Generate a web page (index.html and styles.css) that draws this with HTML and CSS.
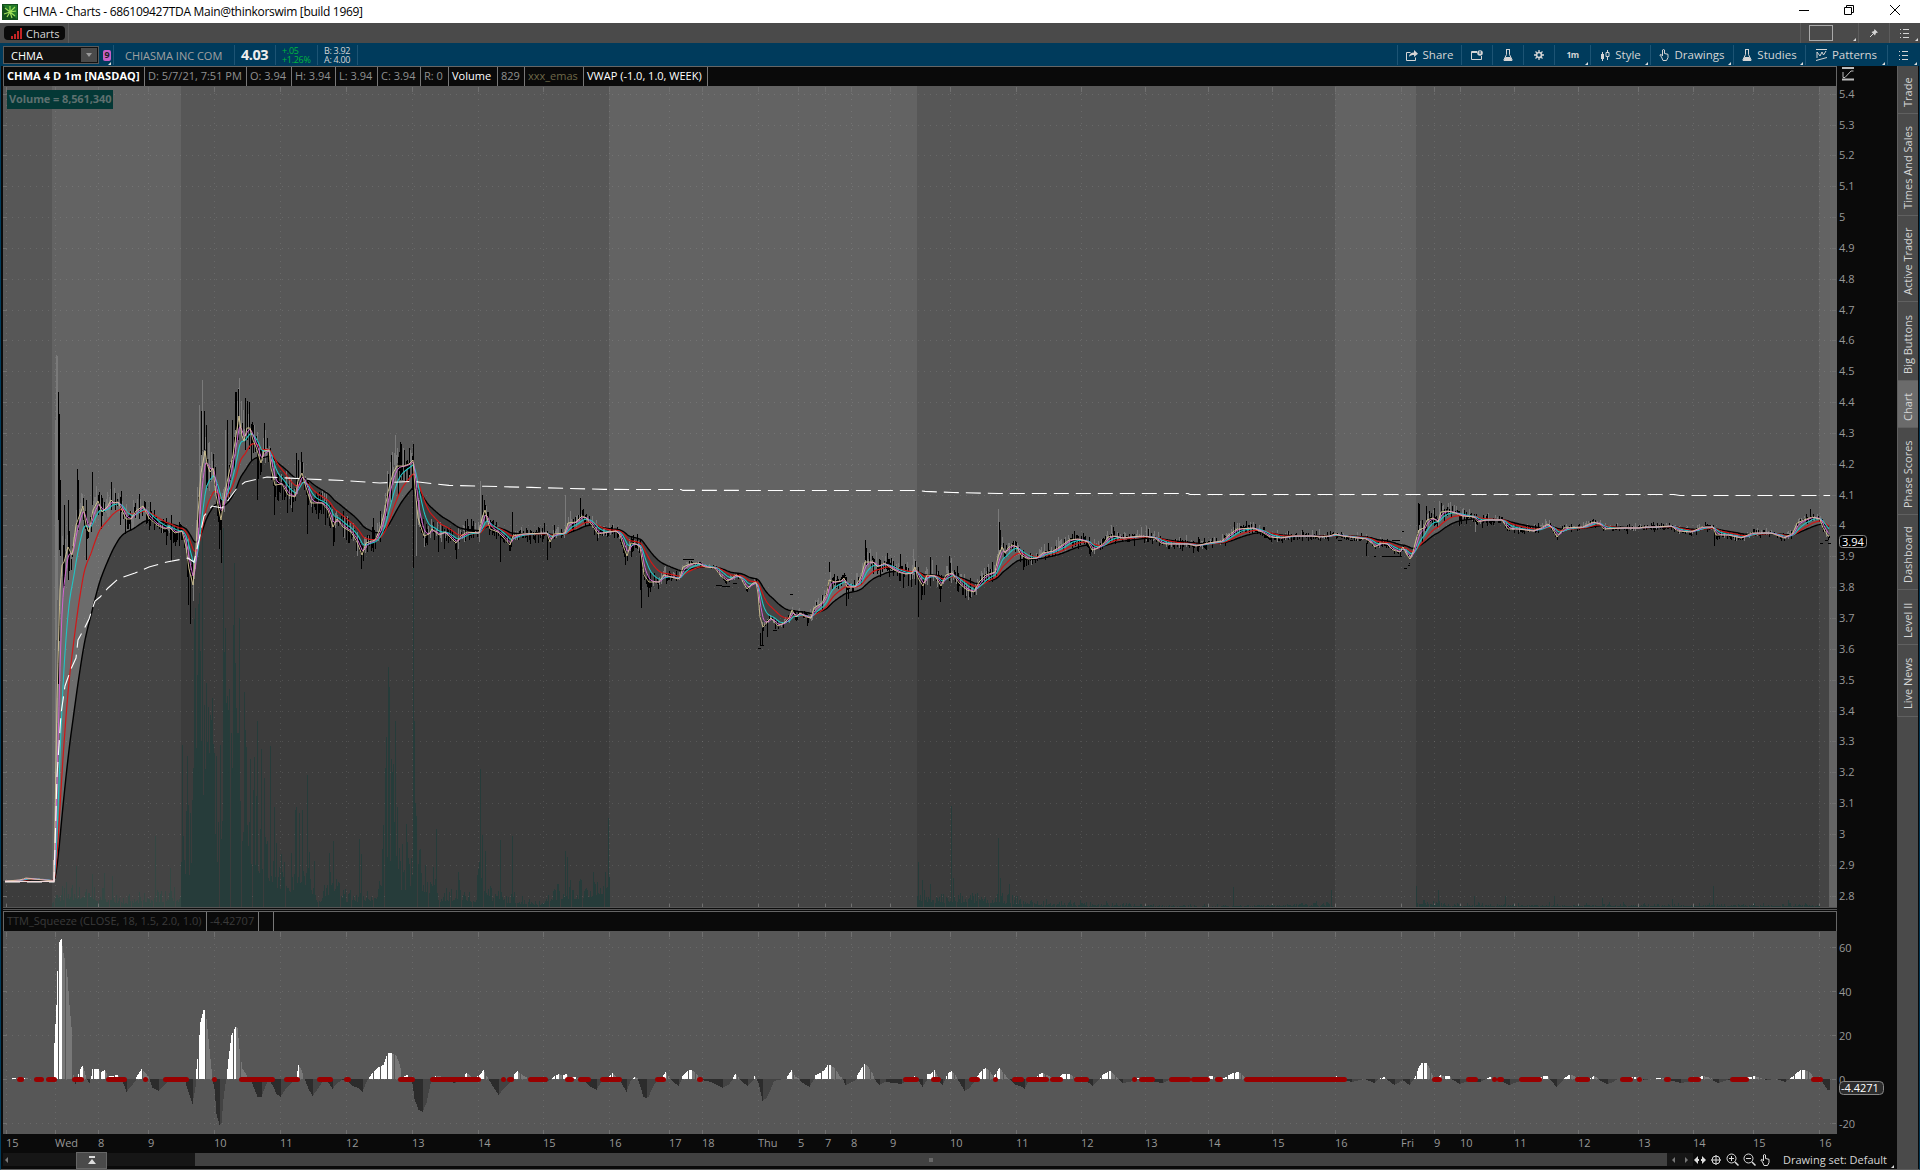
FILE: index.html
```
<!DOCTYPE html>
<html lang="en">

<head>
  <meta charset="UTF-8">
  <meta name="viewport" content="width=device-width, initial-scale=1.0">
  <title>CHMA - Charts</title>
  <link rel="stylesheet" href="styles.css">
</head>

<body>
  <div class="titlebar">
    <svg class="logo" width="16" height="16" viewBox="0 0 16 16">
      <rect width="16" height="16" fill="#124f1c"/>
      <path d="M1 1h14v14z" fill="#237a28"/>
      <path d="M8 8L8 2M8 8L13 3M8 8L14 7M8 8L13 12M8 8L10 14M8 8L5 13M8 8L2 10M8 8L3 4" stroke="#9fe05a" stroke-width="1.2"/>
    </svg>
    <span class="window-title">CHMA - Charts - 686109427TDA Main@thinkorswim [build 1969]</span>
    <svg class="window-controls" width="102" height="12" viewBox="0 0 102 12" fill="none" stroke="#000">
      <path d="M0 6.5h10M45.500 3.500h7v7h-7zM47.500 3.500v-2h7v7h-2M91 1l10 10M101 1l-10 10"/>
    </svg>
  </div>

  <div class="tabbar">
    <div class="tab-cell">
      <div class="main-tab">
        <svg width="12" height="11" viewBox="0 0 12 11" fill="#c22525"><path d="M0 8h2v3h-2zM3 6h2v5h-2zM6 3h2v8h-2zM9 0h2v11h-2z"/></svg>
        <span>Charts</span>
      </div>
    </div>
    <div class="tab-tools">
      <div class="tool corner"><div class="grid-box"></div></div>
      <div class="tool"><svg width="10" height="10" viewBox="0 0 10 10" fill="#d5d5d5" stroke="#d5d5d5"><path d="M5.500 1l3.500 3.500-2 .5-1 2.500L2.500 4l2.500-1z" stroke="none"/><path d="M4.500 5.500L1 9"/></svg></div>
      <div class="tool corner"><svg width="10" height="9" viewBox="0 0 10 9" fill="#d5d5d5"><path d="M0 0h1v1H0zM3 0h6v1H3zM0 4h1v1H0zM3 4h6v1H3zM0 8h1v1H0zM3 8h6v1H3z"/></svg></div>
    </div>
  </div>

  <div class="symbolbar">
    <div class="symbol-info">
      <div class="info-cell symbol-cell corner">
        <div class="symbol-input"><span>CHMA</span><i class="drop"></i></div>
        <b class="link-badge">9</b>
      </div>
      <div class="info-cell company">CHIASMA INC COM</div>
      <div class="info-cell last-price">4.03</div>
      <div class="info-cell stack up"><span>+.05</span><span>+1.26%</span></div>
      <div class="info-cell stack"><span>B: 3.92</span><span>A: 4.00</span></div>
    </div>
    <div class="actions">
      <div class="action"><svg width="12" height="11" viewBox="0 0 12 11" fill="none" stroke="#d5d5d5"><path d="M4.500 2.500h-4v8h9v-3"/><path d="M3 7c0-3 2-4.500 5-4.500V0l4 3.700-4 3.300V5C6 5 4 5.500 3 7z" fill="#d5d5d5" stroke="none"/></svg><span>Share</span></div>
      <div class="action"><svg width="12" height="10" viewBox="0 0 12 10" fill="none" stroke="#d5d5d5"><path d="M6 1.500H.5v8h10V6"/><path d="M1 2.500h5"/><circle cx="9" cy="3" r="2.800" fill="#d5d5d5" stroke="none"/><path d="M9 1v3" stroke="#003b5c"/></svg></div>
      <div class="action"><svg width="10" height="12" viewBox="0 0 10 12" fill="none" stroke="#d5d5d5"><path d="M3 .5h4M3.500 .5v5L.8 11M6.500 .5v5L9.200 11"/><path d="M2.500 8h5l2 4h-9z" fill="#d5d5d5" stroke="none"/></svg></div>
      <div class="action"><svg width="10" height="10" viewBox="0 0 10 10" fill="none" stroke="#d5d5d5"><circle cx="5" cy="5" r="2.500" stroke-width="1.700"/><path d="M5 0v2M5 8v2M0 5h2M8 5h2M1.500 1.500l1.400 1.400M7.100 7.100l1.400 1.400M8.500 1.500L7.100 2.900M2.900 7.100L1.500 8.500" stroke-width="1.300"/></svg></div>
      <div class="action corner"><b class="period">1m</b></div>
      <div class="action corner"><svg width="10" height="11" viewBox="0 0 10 11" fill="none" stroke="#d5d5d5"><path d="M2.500 2v9M7.500 0v2M7.500 7v3"/><path d="M1 4h3v5H1z" fill="#d5d5d5" stroke="none"/><path d="M6 2.500h3v4H6z"/></svg><span>Style</span></div>
      <div class="action corner"><svg width="10" height="12" viewBox="0 0 10 12" fill="none" stroke="#d5d5d5"><path d="M2.500 8L.8 6l1-.8L3.500 7V1q1-1 2 0v3.500l3.500.8v3.200l-1.500 3h-3.500z"/></svg><span>Drawings</span></div>
      <div class="action corner"><svg width="10" height="12" viewBox="0 0 10 12" fill="none" stroke="#d5d5d5"><path d="M3 .5h4M3.500 .5v5L.8 11M6.500 .5v5L9.200 11"/><path d="M2.500 8h5l2 4h-9z" fill="#d5d5d5" stroke="none"/></svg><span>Studies</span></div>
      <div class="action corner"><svg width="11" height="12" viewBox="0 0 11 12" fill="none" stroke="#d5d5d5"><path d="M0 .5h11M0 11.500L11 8.500M1 9V3l3 4 2-4 1.500 3L10 2"/></svg><span>Patterns</span></div>
      <div class="action corner"><svg width="10" height="9" viewBox="0 0 10 9" fill="#d5d5d5"><path d="M0 0h1v1H0zM3 0h6v1H3zM0 4h1v1H0zM3 4h6v1H3zM0 8h1v1H0zM3 8h6v1H3z"/></svg></div>
    </div>
  </div>

  <div class="workspace">
    <div class="charts">
      <div class="legend">
        <div class="legend-items">
          <b class="white symbol-name">CHMA 4 D 1m [NASDAQ]</b>
          <span>D: 5/7/21, 7:51 PM</span>
          <span>O: 3.94</span>
          <span>H: 3.94</span>
          <span>L: 3.94</span>
          <span>C: 3.94</span>
          <span>R: 0</span>
          <span class="white">Volume</span>
          <span>829</span>
          <span class="olive">xxx_emas</span>
          <span class="white">VWAP (-1.0, 1.0, WEEK)</span>
        </div>
        <svg class="scale-icon" width="12" height="14" viewBox="0 0 12 14" fill="none" stroke="#bbb"><path d="M0 1h12M0 12.500h12" stroke-width="2"/><path d="M1 5v5.500h2L9 4h2.500"/></svg>
      </div>
      <div class="price-pane">
        <svg id="price" width="1894" height="825" viewBox="3 86 1894 825"></svg>
        <div class="volume-label">Volume = 8,561,340</div>
      </div>
      <div class="legend study-legend">
        <div class="legend-items study-items">
          <span>TTM_Squeeze (CLOSE, 18, 1.5, 2.0, 1.0)</span>
          <span>-4.42707</span>
          <span></span>
        </div>
      </div>
      <svg id="squeeze" width="1894" height="221" viewBox="3 931 1894 221"></svg>
      <div class="scrollrow">
        <div class="track track-left"><i class="arrow-left"></i></div>
        <div class="expander"><svg width="8" height="9" viewBox="0 0 8 9" fill="#ddd"><path d="M1 0h6v2H1zM4 3l4 5H0z"/></svg></div>
        <div class="track track-mid"></div>
        <div class="thumb"><i class="grip"></i></div>
        <div class="track track-right"><i class="arrow-left"></i><i class="arrow-right"></i></div>
        <div class="chart-tools">
          <svg width="12" height="12" viewBox="0 0 12 12" fill="#ddd"><path d="M0 6l4-4v3h1v2H4v3zM12 6L8 2v3H7v2h1v3z"/></svg>
          <svg width="12" height="12" viewBox="0 0 12 12" fill="none" stroke="#ddd"><circle cx="6" cy="6" r="4"/><path d="M6 1v10M1 6h10"/></svg>
          <svg width="13" height="13" viewBox="0 0 13 13" fill="none" stroke="#ddd"><circle cx="5.500" cy="5.500" r="4.500"/><path d="M3 5.500h5M5.500 3v5"/><path d="M9 9l3.500 3.500" stroke-width="1.500"/></svg>
          <svg width="13" height="13" viewBox="0 0 13 13" fill="none" stroke="#ddd"><circle cx="5.500" cy="5.500" r="4.500"/><path d="M3 5.500h5"/><path d="M9 9l3.500 3.500" stroke-width="1.500"/></svg>
          <svg width="10" height="12" viewBox="0 0 10 12" fill="none" stroke="#ddd"><path d="M2.500 8L.8 6l1-.8L3.500 7V1q1-1 2 0v3.500l3.500.8v3.200l-1.500 3h-3.500z"/></svg>
        </div>
        <div class="drawing-set corner">Drawing set: Default</div>
      </div>
    </div>
    <div class="sidebar">
      <div>Trade</div>
      <div>Times And Sales</div>
      <div>Active Trader</div>
      <div>Big Buttons</div>
      <div class="active">Chart</div>
      <div>Phase Scores</div>
      <div>Dashboard</div>
      <div>Level II</div>
      <div>Live News</div>
    </div>
  </div>

  <script src="chart.js"></script>
</body>

</html>
```

FILE: styles.css
```
* {
  box-sizing: border-box;
}

body {
  margin: 0;
  width: 1920px;
  height: 1170px;
  overflow: hidden;
  background-color: #0a0a0a;
  color: #d5d5d5;
  font-family: "Open Sans", "Noto Sans", sans-serif;
  font-size: 12px;
  line-height: 1;
}

svg {
  display: block;
  flex: none;
}

/* window title */
.titlebar {
  display: flex;
  align-items: center;
  height: 23px;
  padding: 0 19px 0 2px;
  background-color: #fff;
  color: #000;
}

.window-title {
  flex: 1;
  margin-left: 5px;
  letter-spacing: -0.3px;
}

.window-controls {
  margin-top: -3px;
}

/* tab row */
.tabbar {
  display: flex;
  justify-content: space-between;
  height: 20px;
  background-color: #4a4a4a;
}

.tab-cell {
  width: 69px;
  padding: 3px 4px;
  border-right: 1px solid #5c5c5c;
}

.main-tab {
  display: flex;
  align-items: center;
  gap: 3px;
  width: 61px;
  height: 14px;
  padding-left: 7px;
  border-radius: 4px;
  background-color: #0a0a0a;
  font-size: 11px;
}

.tab-tools {
  display: grid;
  grid-template-columns: 58px 31px 31px;
}

.tool {
  display: flex;
  align-items: center;
  justify-content: center;
  border-left: 1px solid #5c5c5c;
}

.grid-box {
  width: 24px;
  height: 16px;
  margin-right: 17px;
  border: 1px solid #aaa;
}

.corner {
  position: relative;
}

.corner::after {
  content: "";
  position: absolute;
  right: 2px;
  bottom: 2px;
  border-left: 3px solid transparent;
  border-bottom: 3px solid #ddd;
}

/* symbol row */
.symbolbar {
  display: flex;
  justify-content: space-between;
  height: 23px;
  padding: 2px 1px 1px 0;
  background-color: #003b5c;
}

.symbol-info {
  display: grid;
  grid-template-columns: 114px 121px 41px 42px 40px;
}

.info-cell {
  display: flex;
  align-items: center;
  border-right: 1px solid #1d5474;
}

.symbol-cell {
  gap: 4px;
  padding-left: 3px;
}

.symbol-input {
  display: flex;
  align-items: center;
  justify-content: space-between;
  width: 96px;
  height: 18px;
  padding: 1px 1px 1px 7px;
  border: 1px solid #5a5a5a;
  background-color: #111;
  color: #fff;
  font-size: 11px;
}

.drop {
  display: flex;
  align-items: center;
  justify-content: center;
  width: 16px;
  height: 14px;
  background-color: #4a4a4a;
}

.drop::after {
  content: "";
  border: 3px solid transparent;
  border-top: 4px solid #999;
  border-bottom: 0;
}

.link-badge {
  width: 8px;
  height: 11px;
  border-radius: 2px;
  background-color: #c75fc7;
  color: #222;
  font-size: 9px;
  line-height: 10px;
  text-align: center;
}

.company {
  padding-left: 11px;
  color: #a0a0a0;
  font-size: 11px;
}

.last-price {
  padding: 1px 0 0 6px;
  color: #eee;
  font-size: 14.500px;
  font-weight: bold;
  letter-spacing: -0.5px;
}

.stack {
  flex-direction: column;
  align-items: flex-start;
  justify-content: center;
  padding-left: 6px;
  font-size: 9px;
  letter-spacing: -0.3px;
}

.up {
  color: #00b83c;
}

.actions {
  display: grid;
  grid-template-columns: 64px 31px 31px 31px 36px 60px 83px 72px 82px 32px;
}

.action {
  display: flex;
  align-items: center;
  justify-content: center;
  gap: 5px;
  border-left: 1px solid #1d5474;
  font-size: 11.500px;
}

.period {
  font-size: 8.500px;
  letter-spacing: -0.5px;
}

.symbolbar .corner::after {
  bottom: 0;
}

/* chart area */
.workspace {
  display: flex;
  height: 1104px;
  padding: 0 1px 0 1px;
  border-left: 1px solid #003b5c;
  border-right: 1px solid #00334f;
  border-bottom: 1px solid #5c5c5c;
}

.charts {
  width: 1895px;
  padding-left: 1px;
}

.legend {
  display: flex;
  height: 20px;
}

.legend-items {
  display: grid;
  grid-template-columns: 141px 102px 45px 44px 42px 43px 28px 49px 27px 59px 124px;
  width: 1834px;
  border: 1px solid #666;
  border-bottom: 0;
}

.legend-items > * {
  padding-left: 3px;
  border-right: 1px solid #777;
  color: #909090;
  font-size: 11px;
  line-height: 17px;
  white-space: nowrap;
}

.legend-items .white {
  color: #fff;
}

.legend-items .symbol-name {
  letter-spacing: 0.1px;
}

.legend-items .olive {
  color: #6e6848;
}

.scale-icon {
  margin: 1px 0 0 5px;
}

.legend-items.study-items {
  grid-template-columns: 203px 52px 15px;
}

.legend-items.study-items > * {
  color: #3a3a3a;
}

.price-pane {
  position: relative;
  height: 825px;
}

.volume-label {
  position: absolute;
  left: 4px;
  top: 4px;
  width: 106px;
  height: 19px;
  padding-left: 2px;
  background-color: #043836;
  color: #5e706f;
  font-size: 11px;
  font-weight: bold;
  letter-spacing: -0.1px;
  line-height: 17px;
  white-space: nowrap;
}

.axis {
  fill: #989898;
  font-size: 11px;
}

.axis-mark {
  fill: #fff;
  font-size: 11px;
}

/* bottom row */
.scrollrow {
  display: flex;
  align-items: flex-start;
  height: 17px;
}

.scrollrow > * {
  flex: none;
}

.track,
.thumb {
  display: flex;
  align-items: center;
  height: 13px;
  margin-top: 1px;
  background-color: #161616;
}

.track-left {
  width: 73px;
  padding-left: 2px;
}

.track-mid {
  width: 88px;
}

.track-right {
  width: 26px;
  padding: 0 5px;
  justify-content: space-between;
}

.arrow-left,
.arrow-right {
  border: 3px solid transparent;
  border-right-color: #777;
  border-left: 0;
}

.arrow-right {
  border-left: 3px solid #777;
  border-right: 0;
}

.expander {
  display: flex;
  align-items: center;
  justify-content: center;
  width: 31px;
  height: 17px;
  border: 1px solid #666;
  background-color: #4a4a4a;
}

.thumb {
  width: 1472px;
  justify-content: center;
  background-color: #414141;
}

.grip {
  width: 4px;
  height: 4px;
  background-color: #686868;
}

.chart-tools {
  display: flex;
  align-items: center;
  gap: 4px;
  height: 15px;
  margin-left: 1px;
}

.drawing-set {
  width: 118px;
  height: 17px;
  margin-left: 8px;
  padding-left: 5px;
  font-size: 11px;
  line-height: 15px;
  white-space: nowrap;
}

.drawing-set.corner::after {
  right: 2px;
  bottom: 1px;
}

/* right tabs */
.sidebar {
  display: grid;
  grid-template-rows: 48px 102px 86px 79px 47px 87px 75px 55px 72px;
  flex: none;
  width: 21px;
  background-color: #4a4a4a;
}

.sidebar div {
  writing-mode: vertical-rl;
  transform: rotate(180deg);
  padding-bottom: 6px;
  border-top: 1px solid #606060;
  border-right: 1px solid #606060;
  line-height: 20px;
  text-align: center;
  font-size: 11px;
}

.sidebar .active {
  background-color: #6b6b6b;
}
```

FILE: chart.js
```
const price = document.getElementById("price");
const squeeze = document.getElementById("squeeze");

function add(svg, tag, attrs, text) {
  const el = document.createElementNS("http://www.w3.org/2000/svg", tag);
  for (const key in attrs) el.setAttribute(key, attrs[key]);
  if (text !== undefined) el.textContent = text;
  svg.appendChild(el);
  return el;
}

// repeatable noise for the bars
let seed = 7;
function rnd() {
  seed = (seed * 16807) % 2147483647;
  return seed / 2147483647;
}

// "x:y x:y" -> [[x, y], ...]
function points(str) {
  return str.trim().split(/\s+/).map(p => p.split(":").map(Number));
}

function valueAt(pts, x) {
  if (x <= pts[0][0]) return pts[0][1];
  for (let i = 1; i < pts.length; i++) {
    if (x <= pts[i][0]) {
      const [x0, y0] = pts[i - 1];
      const [x1, y1] = pts[i];
      return y0 + (y1 - y0) * (x - x0) / (x1 - x0);
    }
  }
  return pts[pts.length - 1][1];
}

const priceY = p => 93.7 + (5.4 - p) * 308.4;

const times = [
  [6, "15"], [55, "Wed"], [98, "8"], [148, "9"], [214, "10"], [280, "11"], [346, "12"], [412, "13"],
  [478, "14"], [543, "15"], [609, "16"], [669, "17"], [702, "18"], [758, "Thu"], [798, "5"], [825, "7"],
  [851, "8"], [890, "9"], [950, "10"], [1016, "11"], [1081, "12"], [1145, "13"], [1208, "14"], [1272, "15"],
  [1335, "16"], [1401, "Fri"], [1434, "9"], [1460, "10"], [1514, "11"], [1578, "12"], [1638, "13"],
  [1693, "14"], [1753, "15"], [1819, "16"]
];

// sessions: start, end, extended hours
const sessions = [
  [3, 52, 0], [52, 181, 1], [181, 609, 0], [609, 917, 1], [917, 1335, 0],
  [1335, 1416, 1], [1416, 1819, 0], [1819, 1830, 1]
];

const fast = points(`5:881 20:880 26:878 34:879 54:881 57:700 60:590 62:565 64:562 68:547 72:555 76:525 83:506 86:525 89:532
 93:510 98:501 102:512 108:506 111:500 114:503 118:502 122:510 126:519 131:519 136:511 143:506 149:518 157:525
 165:529 169:527 175:533 182:531 186:547 189:569 193:585 196:547 198:514 201:473 205:451 207:464 210:472 213:468
 216:495 221:520 225:492 229:473 233:455 237:429 239:416 242:436 244:441 247:428 250:428 253:440 256:447 261:463
 264:451 269:450 271:468 275:485 282:484 288:495 295:497 298:481 302:473 305:484 311:503 322:503 328:510 333:527
 337:519 343:527 351:532 357:542 362:555 366:543 375:540 380:529 384:514 388:492 393:473 397:466 404:466 409:464
 413:460 415:488 418:518 424:536 429:534 432:529 439:535 445:532 451:538 456:543 461:536 467:532 479:533 482:518
 485:510 490:529 498:532 504:538 510:545 513:536 522:534 547:533 550:542 554:534 565:533 568:523 576:522 582:516
 586:518 592:525 598:534 608:532 616:531 620:535 624:548 627:556 631:543 636:544 640:547 642:560 644:575 649:582
 659:582 664:575 671:577 678:579 680:577 683:567 690:564 698:563 705:567 715:568 720:575 727:581 731:579 736:575
 741:578 744:584 747:589 752:584 756:582 758:593 760:617 763:627 767:622 771:618 778:626 784:623 789:618 792:610
 796:617 800:613 806:617 811:618 814:608 822:603 827:593 829:580 835:582 841:581 844:578 847:587 855:587 861:577
 865:562 873:562 878:567 884:563 891:568 898:572 906:574 912:573 915:567 918:578 923:586 927:575 935:576 941:586
 946:575 952:573 959:583 967:590 974:592 979:582 986:575 995:572 998:557 1002:547 1005:553 1008:548 1012:545
 1017:547 1021:555 1028:559 1037:558 1043:553 1053:551 1061:546 1069:540 1078:539 1088:542 1092:550 1096:549
 1104:543 1108:537 1114:536 1122:538 1131:537 1143:536 1155:538 1161:543 1167:544 1188:544 1196:546 1208:543
 1222:541 1229:535 1237:529 1253:528 1262:532 1270:537 1281:538 1292:536 1312:536 1320:537 1329:536 1335:534
 1342:536 1366:539 1372:543 1375:547 1381:543 1387:544 1393:550 1400:552 1403:547 1407:555 1410:559 1413:552
 1416:540 1419:530 1424:528 1427:520 1433:518 1438:522 1441:512 1448:511 1455:513 1463:516 1474:517 1478:522
 1485:520 1502:520 1508:529 1518:529 1533:531 1541:528 1548:524 1552:528 1557:537 1564:528 1583:527 1593:522
 1600:524 1604:529 1622:528 1639:528 1645:527 1656:527 1671:526 1678:531 1691:532 1702:527 1713:527 1716:535
 1728:535 1741:538 1752:533 1771:533 1784:538 1793:533 1797:523 1804:520 1812:517 1820:519 1823:528 1828:536 1830:536`);

const vwap = points(`5:882 54:882 57:776 61:714 65:686 71:669 76:658 78:640 84:629 89:619 95:601 100:597 108:588 118:579
 135:573 149:567 167:562 188:558 194:562 199:540 204:516 212:506 222:508 229:499 237:488 245:482 267:477 306:479
 343:480.5 380:483 412:481.3 449:485.4 486:486.3 531:487.4 604:489.4 681:489.5 683:490.4 917:490.5 925:491.4
 953:492.5 999:493.5 1188:493.5 1190:494.5 1674:494.5 1680:495.5 1830:495.5`);

// half range of the price bars
const range = points(`5:1 54:1 57:60 62:32 80:18 180:12 188:22 205:26 240:24 270:18 350:13 380:16 395:21 412:17 420:14 500:9
 610:8 640:12 700:3 750:4 860:9 917:14 1000:10 1010:8 1240:6 1300:5 1415:4 1420:11 1450:9 1480:6 1600:4 1830:5`);

// top / bottom of single long bars: x, y1, y2, rising
const spikes = [
  [56, 355, 640, 1], [55, 420, 870, 1], [57, 356, 600, 1], [58, 392, 520, 0], [59, 414, 550, 0], [60, 480, 556, 0], [64, 505, 586, 0],
  [68, 500, 580, 0], [77, 469, 525, 0], [78, 480, 530, 0], [92, 472, 505, 0], [111, 482, 510, 0], [86, 500, 560, 0],
  [171, 515, 562, 0], [188, 560, 605, 0], [190, 570, 624, 0], [199, 405, 500, 1], [202, 380, 450, 1], [201, 411, 455, 0],
  [204, 411, 450, 0], [221, 500, 563, 0], [219, 500, 549, 0], [235, 392, 430, 0], [236, 392, 440, 0], [238, 389, 440, 0],
  [245, 398, 450, 0], [247, 401, 440, 0], [225, 430, 490, 1], [227, 420, 480, 0], [232, 420, 460, 0], [257, 440, 500, 0],
  [264, 423, 455, 0], [274, 480, 515, 0], [296, 453, 490, 0], [298, 460, 490, 0], [301, 452, 480, 0], [307, 480, 534, 0],
  [361, 545, 569, 0], [333, 520, 546, 0], [395, 435, 470, 1], [391, 455, 500, 0], [400, 452, 480, 0], [409, 448, 475, 0],
  [412, 462, 490, 0], [413, 463, 568, 0], [416, 500, 556, 1], [480, 481, 530, 1], [482, 495, 515, 0], [484, 500, 515, 0],
  [512, 512, 540, 0], [500, 530, 562, 0], [547, 535, 560, 0], [565, 495, 530, 1], [580, 498, 520, 0], [625, 545, 565, 0],
  [640, 540, 590, 0], [641, 550, 608, 0], [648, 580, 597, 0], [760, 633, 646, 0], [762, 628, 645, 0], [865, 540, 560, 0],
  [866, 548, 565, 0], [829, 562, 572, 0], [846, 580, 606, 0], [767, 620, 637, 0], [918, 578, 617, 0], [921, 580, 600, 0],
  [913, 549, 575, 1], [940, 585, 602, 0], [949, 556, 575, 0], [998, 509, 560, 1], [999, 522, 550, 0], [1000, 530, 550, 0],
  [1111, 525, 538, 1], [1366, 543, 556, 0], [1418, 503, 530, 0], [1419, 504, 525, 0], [1426, 506, 525, 0],
  [1439, 501, 515, 1], [1441, 503, 515, 0], [1475, 522, 532, 1], [1810, 509, 520, 0], [1714, 530, 546, 0], [1090, 545, 556, 0],
  [1023, 550, 570, 0], [1234, 522, 535, 0]
];

// flat prints away from the averages: x, y, width
const prints = [
  [683, 559, 11], [716, 585, 6], [722, 586, 8], [733, 583, 4], [758, 648, 3], [761, 645, 3], [773, 630, 4], [790, 594, 3],
  [843, 575, 3], [1338, 540, 4], [1350, 540, 3], [1382, 556, 20], [1392, 540, 8], [1374, 556, 2], [1404, 568, 3],
  [1408, 565, 2], [1409, 563, 1], [1402, 531, 2], [1820, 543, 3], [1825, 540, 3], [1828, 543, 3]
];

const volumeBase = points(`52:10 70:16 90:14 130:7 170:13 180:12 181:75 191:55 193:100 195:150 205:160 212:120 216:80 220:100
 223:160 235:165 242:110 250:90 262:60 272:45 280:30 290:30 300:50 305:25 312:25 318:8 325:24 332:28 340:14 355:10
 372:14 380:20 385:95 396:75 400:35 410:32 413:80 417:50 422:30 430:28 440:12 460:15 475:10 480:40 485:30 492:12
 540:6 560:18 580:18 609:28 610:0 916:0 917:16 930:9 1000:9 1040:5 1200:2 1330:4 1336:0 1415:0 1416:8 1450:3 1819:3 1820:0`);
const volumeSpikes = points(`76:42 92:34 104:35 112:32 155:72 170:40 182:163 183:72 187:152 186:97 188:103 190:95 193:140
 194:289 195:300 198:304 199:315 197:233 202:370 204:203 206:225 208:201 211:188 213:164 214:155 223:380 225:280
 226:205 227:212 229:219 228:198 231:175 233:283 234:345 235:245 236:200 237:175 239:290 244:216 245:178 250:149
 254:151 257:187 261:159 264:130 270:162 274:101 276:65 281:54 295:98 296:101 299:95 302:98 307:133 309:56 314:47
 329:55 333:67 359:69 361:54 385:140 386:171 388:241 389:221 391:149 393:144 395:187 397:101 402:64 406:84 407:66
 413:342 414:187 415:105 416:92 419:58 436:79 458:36 480:139 482:73 485:57 500:68 512:72 565:57 567:51 593:36
 608:90 918:46 922:28 930:24 951:102 953:30 998:70 1000:30 1009:24 1233:21 1331:18 1416:22 1438:18 1474:12
 1505:12 1554:12 1602:10 1672:9 1713:22 1788:8`);

const momentum = points(`11:0 12:1 24:1 31:0 53:0 54:36 56:74 57:108 58:126 59:137 61:140 63:126 66:110 67:102 69:74 71:52 72:23
 73:4 74:0 75:-5 77:0 78:5 80:10 82:13 84:8 86:0 89:-4 90:0 91:3 92:10 98:10 100:6 104:9 108:3 112:3 117:4 120:1
 122:-2 126:-13 130:-8 135:-2 136:2 141:10 146:5 149:0 152:-9 158:-12 163:-7 168:-2 184:0 187:-10 192:-25 195:-8
 196:10 198:30 200:57 203:69 204:69 206:60 208:40 211:10 212:0 214:-10 216:-35 219:-46 221:-44 223:-20 225:-5
 226:0 228:20 231:44 235:52 237:51 239:30 242:10 247:3 249:0 252:-5 257:-18 261:-18 265:-7 268:-1 272:-6 276:-15
 280:-18 285:-10 290:-5 294:-1 296:2 298:14 301:9 304:0 308:-10 312:-17 316:-12 322:-3 326:-1 330:-7 332:-10
 336:-5 341:-1 346:-1 352:-7 358:-9 362:-13 366:-3 369:2 373:7 378:12 383:14 387:26 391:26 396:23 399:15 402:2
 407:4 409:0 412:-5 414:-20 418:-31 422:-33 426:-24 430:-5 433:1 435:3 445:2 450:-3 454:-4 460:-2 463:2 466:6
 469:4 474:1 480:5 483:9 486:3 488:0 492:-7 498:-16 503:-10 508:-5 512:0 514:5 517:8 522:4 527:1 530:-3 540:-1
 546:-3 550:-1 553:2 558:5 562:3 566:5 569:1 575:2 580:0 585:-3 590:-8 596:-11 600:-4 606:-1 609:3 612:6 616:2
 619:0 622:-6 626:-13 630:-2 634:2 637:1 640:-8 643:-18 646:-19 648:-18 652:-9 656:-2 662:2 665:7 669:1 670:0
 673:-3 678:-7 681:-1 682:3 687:8 691:9 695:6 699:1 701:-1 711:-3 722:-9 728:-6 732:-1 733:2 735:5 738:2 739:0
 742:-3 747:-7 750:-4 753:-1 754:3 756:0 758:-4 762:-22 766:-19 770:-11 773:-3 777:-1 785:0 790:7 791:9 793:5
 795:2 798:1 800:-2 805:-6 809:-8 813:-1 815:4 820:6 824:9 827:14 830:14 835:10 839:3 842:1 845:-6 850:-4 855:-1
 856:2 860:9 864:15 867:13 872:6 874:0 876:-3 879:-6 885:-3 901:-5 911:1 914:3 917:0 922:-8 926:-2 927:5 930:5
 934:9 937:3 940:-4 942:-6 945:0 947:5 951:8 955:4 957:0 960:-5 964:-12 968:-10 973:-4 976:0 977:3 981:8 985:11
 989:8 993:2 996:7 999:11 1003:6 1007:1 1011:-2 1015:-6 1020:-7 1024:-10 1028:-2 1034:0 1038:4 1042:6 1047:4
 1050:2 1058:1 1062:5 1069:5 1074:2 1081:0 1085:-1 1092:-7 1097:-2 1100:1 1103:5 1110:8 1113:5 1118:0 1122:-4
 1130:-3 1135:1 1146:2 1154:-3 1162:-4 1171:0 1205:0 1209:3 1213:3 1215:0 1224:1 1230:5 1238:7 1242:4 1246:0
 1275:-3 1290:0 1334:0 1336:3 1338:1 1347:-2 1351:-3 1364:0 1374:-4 1378:0 1384:2 1387:-1 1394:-6 1399:-3 1402:-1
 1409:-6 1413:-1 1415:3 1418:11 1421:16 1426:16 1429:11 1432:4 1434:0 1437:0 1440:4 1443:3 1449:3 1451:0 1459:-5
 1468:-2 1480:-3 1486:0 1490:2 1496:0 1502:-3 1509:-6 1517:-3 1525:0 1538:0 1542:3 1547:3 1550:-1 1556:-8 1562:-2
 1564:1 1570:5 1575:2 1577:0 1582:-3 1588:-1 1593:3 1597:1 1600:-2 1607:-5 1613:-3 1617:0 1635:2 1641:1 1643:-1
 1660:1 1666:0 1672:-2 1680:-4 1688:-3 1696:1 1702:3 1711:1 1713:-2 1718:-4 1727:-1 1737:-1 1749:2 1754:3 1760:1
 1766:-1 1776:0 1785:-3 1789:0 1794:4 1800:9 1804:9 1810:6 1813:2 1818:0 1821:-2 1827:-11 1829:-11`);

const squeezes = points(`17:24 34:44 46:57 72:84 106:127 143:148 163:189 212:217 239:275 284:300 317:333 344:351 398:415 430:481
 501:506 507:514 528:548 565:574 578:591 600:622 655:666 697:703 903:919 931:941 969:980 993:998 1012:1024
 1026:1049 1050:1063 1074:1089 1132:1137 1139:1155 1169:1191 1191:1210 1215:1223 1244:1347 1432:1442 1466:1478
 1492:1497 1497:1504 1519:1542 1575:1590 1620:1633 1637:1642 1664:1671 1688:1701 1730:1749 1811:1823`);

// exponential average of a per-pixel series
function ema(values, length) {
  const k = 1 - Math.exp(-1 / length);
  let last = values[0];
  return values.map(v => (last += (v - last) * k));
}

function line(values) {
  return "M" + values.map((v, i) => (i + 5) + " " + v.toFixed(1)).join("L");
}

function grid(svg, rows, top, bottom) {
  const style = { stroke: "#fff", "stroke-opacity": 0.11, "stroke-dasharray": "1 5", "shape-rendering": "crispEdges" };
  rows.forEach(y => add(svg, "path", { ...style, d: `M6 ${Math.round(y) + 0.5}H1836` }));
  times.forEach(([x]) => add(svg, "path", { ...style, d: `M${x + 0.5} ${top}V${bottom}` }));
  const ticks = times.map(([x]) => `M${x + 0.5} ${top}v5M${x + 0.5} ${bottom}v-4`).join("") +
    rows.map(y => `M3 ${Math.round(y) + 0.5}h4M1832 ${Math.round(y) + 0.5}h4`).join("");
  add(svg, "path", { d: ticks, stroke: "#707070", "shape-rendering": "crispEdges" });
}

function drawPrice() {
  const series = [];
  for (let x = 5; x <= 1829; x++) series.push(valueAt(fast, x));
  const magenta = ema(series, 2.5);
  const cyan = ema(series, 6.5);
  const red = ema(series, 13);
  const slow = ema(series, 24);

  add(price, "rect", { x: 3, y: 86, width: 1834, height: 822, fill: "#646464" });
  const defs = add(price, "defs", {});
  const clip = add(defs, "clipPath", { id: "below" });
  add(clip, "path", { d: line(slow) + "V908H3V881Z" });
  sessions.forEach(([a, b, ext]) => add(price, "rect", { x: a, y: 86, width: b - a, height: 822, fill: ext ? "#636363" : "#575757" }));
  add(price, "path", { d: line(series) + "L" + slow.map((v, i) => (i + 5) + " " + v.toFixed(1)).reverse().join("L") + "Z", fill: "#fff", "fill-opacity": 0.06 });
  sessions.forEach(([a, b, ext]) => add(price, "rect", { x: a, y: 86, width: b - a, height: 822, fill: ext ? "#444" : "#3c3c3c", "clip-path": "url(#below)" }));

  const rows = [];
  for (let i = 0; i <= 26; i++) rows.push(priceY(5.4 - i / 10));
  grid(price, rows, 87, 908);

  // volume
  const spikeAt = Object.fromEntries(volumeSpikes);
  let day = "", ext = "";
  for (let x = 52; x < 1820; x++) {
    const base = valueAt(volumeBase, x);
    const h = spikeAt[x] || base * (0.5 + rnd() * rnd() * 1.5);
    if (h < 0.5 || (x % 11 === 10 && !spikeAt[x])) continue;
    const bar = `M${x} 908v${-Math.round(h)}h1V908z`;
    if (x < 181) ext += bar; else day += bar;
  }
  add(price, "path", { d: ext, fill: "#344743", "shape-rendering": "crispEdges" });
  add(price, "path", { d: day, fill: "#263c3a", "shape-rendering": "crispEdges" });

  // price bars
  let up = "", down = "";
  for (let x = 6; x < 1830; x++) {
    const y = valueAt(fast, x);
    const slope = valueAt(fast, x + 2) - valueAt(fast, x - 3);
    const r = valueAt(range, x);
    const rising = slope < -2 ? rnd() < 0.7 : rnd() < 0.25;
    const mid = y + (rnd() - 0.5) * r * 0.9 + (rising ? -0.2 : 0.05) * r;
    const half = r * (0.2 + rnd() * rnd());
    const bar = `M${x} ${Math.round(mid - half)}h1V${Math.round(mid + half)}h-1z`;
    if (rnd() < 0.12) continue;
    if (rising) up += bar; else down += bar;
  }
  spikes.forEach(([x, a, b, rising]) => {
    const bar = `M${x} ${a}h1V${b}h-1z`;
    if (rising) up += bar; else down += bar;
  });
  prints.forEach(([x, y, w]) => (down += `M${x} ${y}h${w}v1h-${w}z`));
  add(price, "path", { d: up, fill: "#7a7a7a", "shape-rendering": "crispEdges" });
  add(price, "path", { d: down, fill: "#000", "shape-rendering": "crispEdges" });

  add(price, "path", { d: line(slow), fill: "none", stroke: "#000", "stroke-width": 1.4 });
  add(price, "path", { d: line(red), fill: "none", stroke: "#d01818", "stroke-width": 1.2 });
  add(price, "path", { d: line(cyan), fill: "none", stroke: "#20c5c5", "stroke-width": 1.1 });
  add(price, "path", { d: line(magenta), fill: "none", stroke: "#d264d2" });
  add(price, "path", { d: line(series), fill: "none", stroke: "#d8c896", "stroke-width": 0.9 });
  add(price, "path", { d: "M" + vwap.map(p => p.join(" ")).join("L"), fill: "none", stroke: "#fff", "stroke-width": 1.1, "stroke-dasharray": "15 7" });
  add(price, "path", { d: "M5 881.500H54V860", fill: "none", stroke: "#f3dada", "stroke-width": 1.2 });

  add(price, "path", { d: "M3 907.500H1837M3 909.500H1837", stroke: "#555" });
  rows.forEach((y, i) => add(price, "text", { x: 1839, y: y + 4, class: "axis" }, String(Number((5.4 - i / 10).toFixed(1)))));
  add(price, "rect", { x: 1839.5, y: 535.5, width: 27, height: 12, rx: 3, fill: "#000", stroke: "#888" });
  add(price, "text", { x: 1842, y: 545.5, class: "axis-mark" }, "3.94");
}

function drawSqueeze() {
  add(squeeze, "rect", { x: 3, y: 931, width: 1834, height: 203, fill: "#575757" });
  const levels = [60, 40, 20, 0, -20];
  const levelY = v => 1079.3 - v * 2.2;
  grid(squeeze, levels.map(v => Math.floor(levelY(v))), 932, 1134);

  const fills = { "#fff": "", "#787878": "", "#2c2c2c": "", "#434343": "" };
  for (let x = 10; x < 1830; x++) {
    const h = valueAt(momentum, x);
    const before = valueAt(momentum, x - 1);
    if (Math.abs(h) < 0.4) continue;
    if (x % 7 === 2 && h > 0) continue;
    let color;
    if (h > 0) color = h >= before ? "#fff" : "#787878";
    else color = h <= before ? "#2c2c2c" : "#434343";
    fills[color] += `M${x} 1079h1v${-Math.round(h)}h-1z`;
  }
  for (const color in fills) add(squeeze, "path", { d: fills[color], fill: color, "shape-rendering": "crispEdges" });

  squeezes.forEach(([a, b]) => add(squeeze, "rect", { x: a, y: 1077, width: b - a, height: 5, rx: 2.5, fill: "#990000" }));

  levels.forEach(v => add(squeeze, "text", { x: 1839, y: levelY(v) + 4.5, class: "axis" }, String(v)));
  add(squeeze, "rect", { x: 1839.5, y: 1081.5, width: 44, height: 13, rx: 4, fill: "#2c2c2c", stroke: "#888" });
  add(squeeze, "text", { x: 1841, y: 1092, class: "axis-mark" }, "-4.4271");
  times.forEach(([x, label]) => add(squeeze, "text", { x: x, y: 1147, class: "axis" }, label));
}

drawPrice();
drawSqueeze();
```
